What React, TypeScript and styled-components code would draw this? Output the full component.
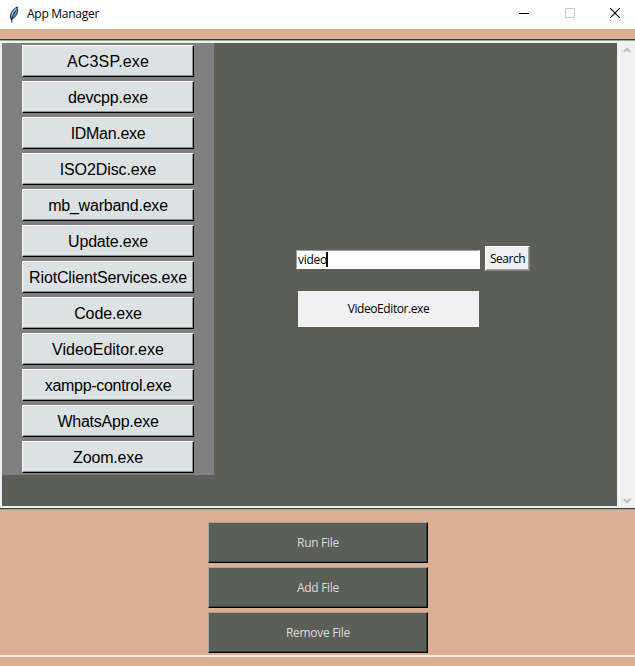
import React from "react";
import styled, { createGlobalStyle } from "styled-components";

const GlobalStyle = createGlobalStyle`
  * { box-sizing: border-box; }
  html, body { margin: 0; padding: 0; overflow: hidden; background: #dcae94; }
  button { margin: 0; border-radius: 0; font: inherit; }
`;

const Window = styled.div`
  width: 635px;
  height: 666px;
  display: flex;
  flex-direction: column;
  background: #dcae94;
  color: #000;
  font: 12px/16px "Open Sans", "Noto Sans", sans-serif;
`;

const TitleBar = styled.header`
  height: 29px;
  flex: none;
  display: flex;
  align-items: center;
  padding-left: 6px;
  background: #fff;
`;

const Title = styled.span`
  flex: 1;
  padding: 0 0 1px 5px;
  letter-spacing: -0.27px;
`;

const WindowControls = styled.div`
  display: flex;
  height: 100%;
`;

const ControlButton = styled.div`
  width: 45.5px;
  padding: 8px 0 0 20.5px;
  line-height: 0;
`;

const Workspace = styled.main`
  height: 471px;
  flex: none;
  margin-top: 10px;
  border-top: 1px solid #3b3e39;
  border-bottom: 1px solid #a3a5a2;
`;

const WorkspaceInner = styled.div`
  height: 469px;
  display: flex;
  border-top: 1px solid #a3a5a2;
  border-bottom: 1px solid #3b3e39;
  background: #f0f0f0;
`;

const Canvas = styled.div`
  width: 617px;
  height: 467px;
  display: flex;
  align-items: flex-start;
  border: solid #f0f0f0;
  border-width: 2px 0 2px 2px;
  background: #5c5f57;
`;

const AppList = styled.nav`
  width: 212px;
  height: 432px;
  display: flex;
  flex-direction: column;
  gap: 4px;
  padding: 2px 20px;
  background: #808080;
`;

const AppButton = styled.button<{ $tracking: number }>`
  height: 32px;
  padding: 0;
  flex: none;
  border: 1px solid;
  border-color: #fff #000 #000 #fff;
  box-shadow: inset -1px -1px #8b9191;
  background: #dce1e3;
  color: #000;
  font: 16px/29px "Liberation Sans", Arial, sans-serif;
  letter-spacing: ${(p) => p.$tracking}px;
`;

const SearchPane = styled.section`
  padding: 203px 0 0 82px;
`;

const SearchRow = styled.div`
  display: flex;
  align-items: center;
  gap: 5px;
`;

const SearchField = styled.div`
  width: 184px;
  height: 19px;
  margin-top: 2px;
  display: flex;
  align-items: center;
  padding-left: 1px;
  border: 1px solid;
  border-color: #a0a0a0 #fff #fff #a0a0a0;
  background: #fff;
  letter-spacing: -0.25px;
`;

const Caret = styled.span`
  width: 2px;
  height: 15px;
  margin-left: -1px;
  background: #000;
`;

const SearchButton = styled.button`
  width: 45px;
  height: 25px;
  padding: 0;
  border: 1px solid;
  border-color: #fff #808080 #808080 #fff;
  box-shadow: inset -1px -1px #a0a0a0;
  background: #f0f0f0;
  color: #000;
  letter-spacing: -0.5px;
`;

const ResultButton = styled.button`
  display: block;
  width: 181px;
  height: 36px;
  margin: 20px 0 0 2px;
  padding: 0;
  border: 0;
  background: #f0f0f0;
  color: #000;
  letter-spacing: -0.42px;
`;

const ScrollBar = styled.div`
  width: 18px;
  height: 467px;
  display: flex;
  flex-direction: column;
  justify-content: space-between;
  align-items: flex-end;
  padding: 6px 4px 4px 0;
  border-left: 2px solid #f0f0f0;
  box-shadow: inset 1px 0 #fff;
`;

const Actions = styled.footer`
  height: 147px;
  display: flex;
  flex-direction: column;
  align-items: center;
  gap: 4px;
  padding: 12px 0 0 1px;
  border-bottom: 2px solid #f0f0f0;
`;

const ActionButton = styled.button`
  width: 220px;
  height: 41px;
  flex: none;
  padding: 0;
  border: 1px solid;
  border-color: #a3a5a2 #000 #000 #a3a5a2;
  box-shadow: inset -1px -1px #3b3e39;
  background: #5c5f57;
  color: #d9dbd7;
  letter-spacing: -0.3px;
`;

const apps = [
  { name: "AC3SP.exe", tracking: 0.15 },
  { name: "devcpp.exe", tracking: -0.2 },
  { name: "IDMan.exe", tracking: -0.3 },
  { name: "ISO2Disc.exe", tracking: -0.1 },
  { name: "mb_warband.exe", tracking: -0.22 },
  { name: "Update.exe", tracking: -0.2 },
  { name: "RiotClientServices.exe", tracking: -0.14 },
  { name: "Code.exe", tracking: -0.1 },
  { name: "VideoEditor.exe", tracking: 0 },
  { name: "xampp-control.exe", tracking: -0.3 },
  { name: "WhatsApp.exe", tracking: -0.25 },
  { name: "Zoom.exe", tracking: -0.15 },
];

const FeatherIcon = () => (
  <svg width="16" height="18" viewBox="0 0 16 18">
    <path d="M5.2 13.5C3.2 9 5.5 4 11.2 1c1.3 4.5-.8 9.5-4.8 12z" fill="#5b93d0" stroke="#18232f" />
    <path d="M5.9 10.5C6.4 7 7.7 4.6 10 2.7" fill="none" stroke="#b9dcf6" />
    <path d="M5.8 16.5V12.5c1-3 2-5 3.6-7.5" fill="none" stroke="#111" />
  </svg>
);

const Chevron = ({ down = false }: { down?: boolean }) => (
  <svg width="8" height="6" viewBox="0 0 8 6">
    <path d={down ? "M.7 1 4 4.3 7.3 1" : "M.7 5 4 1.7 7.3 5"} fill="none" stroke="#bfbfbf" strokeWidth="2" />
  </svg>
);

export default function App() {
  return (
    <>
      <GlobalStyle />
      <Window>
        <TitleBar>
          <FeatherIcon />
          <Title>App Manager</Title>
          <WindowControls>
            <ControlButton>
              <svg width="10" height="10"><path d="M0 5.5h10" stroke="#000" /></svg>
            </ControlButton>
            <ControlButton>
              <svg width="10" height="10"><path d="M.5.5h9v9h-9z" fill="none" stroke="#ccc" /></svg>
            </ControlButton>
            <ControlButton>
              <svg width="10" height="10"><path d="m0 0 10 10M10 0 0 10" stroke="#000" strokeWidth="1.1" /></svg>
            </ControlButton>
          </WindowControls>
        </TitleBar>
        <Workspace>
          <WorkspaceInner>
            <Canvas>
              <AppList>
                {apps.map((app) => (
                  <AppButton key={app.name} $tracking={app.tracking}>{app.name}</AppButton>
                ))}
              </AppList>
              <SearchPane>
                <SearchRow>
                  <SearchField>video<Caret /></SearchField>
                  <SearchButton>Search</SearchButton>
                </SearchRow>
                <ResultButton>VideoEditor.exe</ResultButton>
              </SearchPane>
            </Canvas>
            <ScrollBar>
              <Chevron />
              <Chevron down />
            </ScrollBar>
          </WorkspaceInner>
        </Workspace>
        <Actions>
          <ActionButton>Run File</ActionButton>
          <ActionButton>Add File</ActionButton>
          <ActionButton>Remove File</ActionButton>
        </Actions>
      </Window>
    </>
  );
}
